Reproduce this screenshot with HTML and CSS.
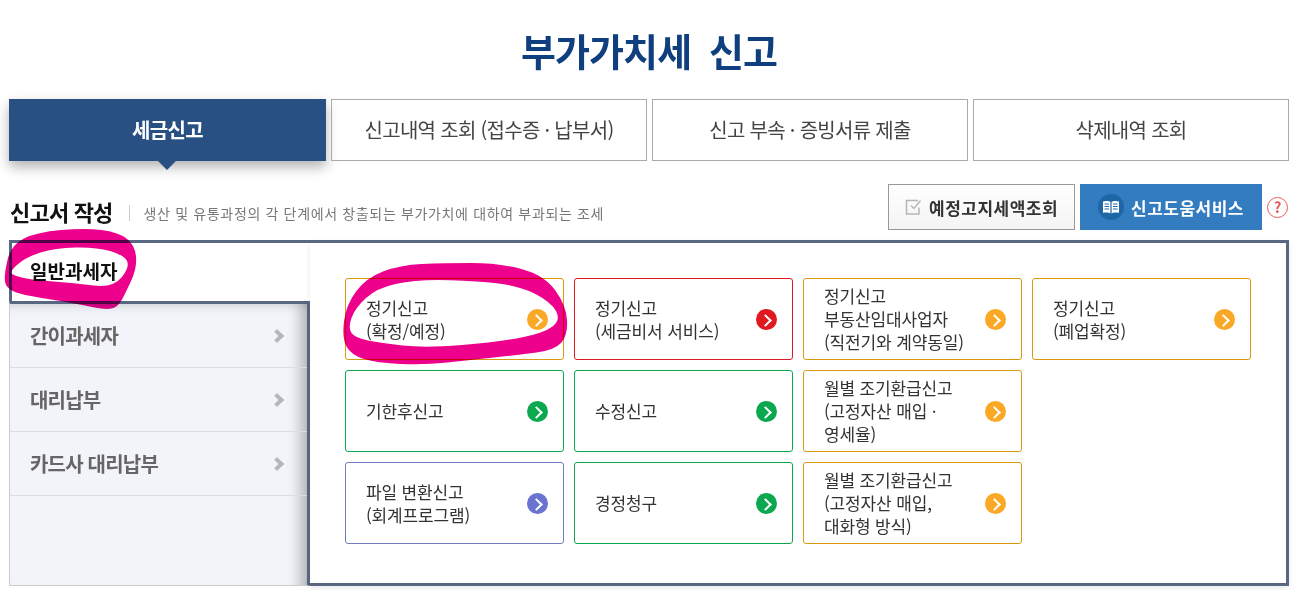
FILE: index.html
```html
<!DOCTYPE html>
<html lang="ko">
<head>
    <meta charset="UTF-8">
    <title>부가가치세 신고</title>
    <link rel="stylesheet" href="styles.css">
</head>
<body>
    <div class="page">
        <h1 class="page-title">부가가치세 신고</h1>

        <div class="tabs">
            <div class="tab active">세금신고</div>
            <div class="tab">신고내역 조회 (접수증 · 납부서)</div>
            <div class="tab">신고 부속 · 증빙서류 제출</div>
            <div class="tab">삭제내역 조회</div>
        </div>

        <div class="section-head">
            <div class="section-title">신고서 작성</div>
            <div class="section-desc">생산 및 유통과정의 각 단계에서 창출되는 부가가치에 대하여 부과되는 조세</div>
            <div class="btn btn-gray">
                <svg class="btn-check" width="18" height="18" viewBox="0 0 18 18" fill="none">
                    <path d="M14 9.5V16H1.5V2.5H13" stroke="#b4b6bb" stroke-width="1.5"/>
                    <path d="M6 7.5L9 10.5L15.5 2.5" stroke="#b4b6bb" stroke-width="1.5"/>
                </svg>
                예정고지세액조회
            </div>
            <div class="btn btn-blue">
                <span class="btn-book">
                    <svg width="18" height="14" viewBox="0 0 18 14" fill="#fff">
                        <path d="M1 1.5C4 .6 7 .8 8.4 2V13.4C7 12.4 4 12.2 1 12.8Z"/>
                        <path d="M17 1.5C14 .6 11 .8 9.6 2V13.4C11 12.4 14 12.2 17 12.8Z"/>
                        <path d="M2.5 4H7M2.5 6.5H7M2.5 9H7M11 4H15.5M11 6.5H15.5M11 9H15.5" stroke="#1e66a6" stroke-width="1"/>
                    </svg>
                </span>
                신고도움서비스
            </div>
            <div class="help">?</div>
        </div>

        <div class="panel">
            <div class="side">
                <div class="side-active">일반과세자</div>
                <div class="side-list">
                    <div class="side-item">간이과세자<span class="side-arrow"></span></div>
                    <div class="side-item">대리납부<span class="side-arrow"></span></div>
                    <div class="side-item">카드사 대리납부<span class="side-arrow"></span></div>
                </div>
            </div>
            <div class="content">
                <div class="card-grid">
                    <div class="card orange"><span>정기신고<br>(확정/예정)</span><i class="go"></i></div>
                    <div class="card red"><span>정기신고<br>(세금비서 서비스)</span><i class="go"></i></div>
                    <div class="card orange"><span>정기신고<br>부동산임대사업자<br>(직전기와 계약동일)</span><i class="go"></i></div>
                    <div class="card orange"><span>정기신고<br>(폐업확정)</span><i class="go"></i></div>

                    <div class="card green"><span>기한후신고</span><i class="go"></i></div>
                    <div class="card green"><span>수정신고</span><i class="go"></i></div>
                    <div class="card orange"><span>월별 조기환급신고<br>(고정자산 매입 ·<br>영세율)</span><i class="go"></i></div>
                    <div class="card-empty"></div>

                    <div class="card purple"><span>파일 변환신고<br>(회계프로그램)</span><i class="go"></i></div>
                    <div class="card green"><span>경정청구</span><i class="go"></i></div>
                    <div class="card orange"><span>월별 조기환급신고<br>(고정자산 매입,<br>대화형 방식)</span><i class="go"></i></div>
                </div>
            </div>
        </div>
    </div>

    <!-- highlighter marks drawn over the page -->
    <svg class="marks" width="1296" height="590" viewBox="0 0 1296 590">
        <path fill="#ec008c" fill-rule="evenodd" d="M7.5 260Q11 245 24 238.5Q37 232 61 230Q85 228 101.5 230Q118 232 126.5 238.5Q135 245 136 256.5Q137 268 131.5 280Q126 292 122 299.5Q118 307 111.5 308.5Q105 310 89.5 306.5Q74 303 48 299Q22 295 14 291.5Q6 288 5 281.5Q4 275 7.5 260Z
        M17.5 264.5Q26 257 40.5 252.5Q55 248 75.5 247.5Q96 247 110 251Q124 255 127 261Q130 267 121.5 277.5Q113 288 93.5 285.5Q74 283 53.5 281.5Q33 280 24 278Q15 276 12 274Q9 272 17.5 264.5Z"/>
        <path fill="#ec008c" fill-rule="evenodd" d="M344 321.5Q346 305 356 291.5Q366 278 383 271.5Q400 265 422 264Q444 263 471.5 263Q499 263 521.5 269Q544 275 555 290Q566 305 567 320Q568 335 561.5 342.5Q555 350 536.5 352.5Q518 355 494 357.5Q470 360 447.5 362.5Q425 365 401 364Q377 363 364 359Q351 355 346.5 346.5Q342 338 344 321.5Z
        M351.5 318Q355 308 366 298Q377 288 395.5 284Q414 280 438 280Q462 280 490 282.5Q518 285 534.5 293.5Q551 302 556 311Q561 320 552.5 326.5Q544 333 521.5 337.5Q499 342 462 345Q425 348 403 345.5Q381 343 368 340.5Q355 338 351.5 333Q348 328 351.5 318Z"/>
    </svg>
</body>
</html>
```

FILE: styles.css
```css
* {
    box-sizing: border-box;
}

body {
    margin: 0;
    height: 590px;
    overflow: hidden;
    background: #ffffff;
    font-family: "Noto Sans CJK KR", "Noto Sans", sans-serif;
    color: #333;
}

.page {
    width: 1280px;
    margin-left: 9px;
}

.page-title {
    margin: 0;
    height: 99px;
    padding: 21px 0 0 0;
    text-align: center;
    font-size: 38px;
    line-height: 58px;
    font-weight: 700;
    letter-spacing: -0.9px;
    word-spacing: 8px;
    color: #103f7f;
}

.tabs {
    display: grid;
    grid-template-columns: 317px 316px 316px 316px;
    gap: 5px;
}

.tab {
    position: relative;
    height: 62px;
    padding-bottom: 2px;
    display: flex;
    align-items: center;
    justify-content: center;
    border: 1px solid #aaaaaa;
    font-size: 20px;
    letter-spacing: -0.7px;
    color: #444;
}

.tab.active {
    background: #285082;
    border: 0;
    color: #fff;
    font-weight: 700;
    box-shadow: 0 6px 12px rgba(0, 0, 0, 0.3);
}

.tab.active::after {
    content: "";
    position: absolute;
    left: 149px;
    top: 62px;
    border-top: 9px solid #285082;
    border-left: 9px solid transparent;
    border-right: 9px solid transparent;
}

.section-head {
    display: flex;
    align-items: center;
    height: 46px;
    margin-top: 23px;
}

.section-title {
    margin-left: 1px;
    font-size: 22px;
    font-weight: 700;
    letter-spacing: -0.8px;
    color: #111;
    padding-top: 8px;
}

.section-desc {
    margin-left: 16px;
    padding-left: 14px;
    margin-top: 12px;
    height: 16px;
    line-height: 16px;
    border-left: 1px solid #cccccc;
    flex: 1;
    font-size: 14px;
    letter-spacing: 0.65px;
    white-space: nowrap;
    color: #777;
}

.btn {
    height: 46px;
    display: flex;
    align-items: center;
    font-size: 17px;
    font-weight: 700;
    letter-spacing: 0.5px;
    white-space: nowrap;
}

.btn-gray {
    width: 187px;
    padding-left: 16px;
    gap: 6px;
    border: 1px solid #999999;
    background: linear-gradient(to bottom, #ffffff, #f4f4f4);
    color: #333;
}

.btn-blue {
    width: 182px;
    margin-left: 5px;
    padding-left: 18px;
    gap: 7px;
    background: #337cc0;
    color: #fff;
}

.btn-book {
    width: 26px;
    height: 26px;
    border-radius: 50%;
    background: #1e66a6;
    display: flex;
    align-items: center;
    justify-content: center;
}

.help {
    width: 21px;
    height: 21px;
    margin: 0 1px 0 5px;
    border: 1.5px solid #e85a5a;
    border-radius: 50%;
    color: #e85a5a;
    font-size: 15px;
    font-weight: 700;
    line-height: 18px;
    letter-spacing: 0;
    text-align: center;
}

.panel {
    display: flex;
    height: 346px;
    margin-top: 10px;
}

.side {
    width: 301px;
    flex-shrink: 0;
    display: flex;
    flex-direction: column;
}

.side-active {
    height: 61px;
    padding: 14px 0 0 18px;
    border-top: 3px solid #5a6782;
    border-left: 3px solid #5a6782;
    font-size: 19px;
    font-weight: 700;
    color: #111;
}

.side-list {
    flex: 1;
    background: #f3f4fa;
    border-top: 3px solid #5a6782;
    border-right: 3px solid #5a6782;
    border-left: 1px solid #cccccc;
    border-bottom: 1px solid #cccccc;
    box-shadow: inset -18px 0 14px -12px rgba(0, 0, 0, 0.28), inset 0 10px 10px -8px rgba(0, 0, 0, 0.14);
}

.side-item {
    height: 64px;
    padding: 0 23px 0 20px;
    display: flex;
    align-items: center;
    justify-content: space-between;
    border-bottom: 1px solid #dcdde3;
    font-size: 20px;
    font-weight: 700;
    letter-spacing: -0.8px;
    color: #666;
}

.side-arrow {
    width: 10px;
    height: 10px;
    margin-right: 2px;
    border-top: 4px solid #b4b6c0;
    border-right: 4px solid #b4b6c0;
    transform: rotate(45deg);
}

.content {
    flex: 1;
    padding: 35px 0 0 35px;
    border-top: 3px solid #5a6782;
    border-right: 3px solid #5a6782;
    border-bottom: 3px solid #5a6782;
    background: #fff;
    box-shadow: 0 3px 6px rgba(0, 0, 0, 0.08);
}

.card-grid {
    display: grid;
    grid-template-columns: repeat(4, 219px);
    grid-auto-rows: 82px;
    gap: 10px;
}

.card {
    display: flex;
    align-items: center;
    justify-content: space-between;
    padding: 0 15px 0 20px;
    border: 1px solid;
    border-radius: 3px;
    font-size: 17px;
    line-height: 23px;
    letter-spacing: -0.15px;
    color: #333;
}

.card span {
    margin-top: -1px;
}

.go {
    position: relative;
    width: 21px;
    height: 21px;
    border-radius: 50%;
    flex-shrink: 0;
}

.go::after {
    content: "";
    position: absolute;
    left: 5px;
    top: 7px;
    width: 7px;
    height: 7px;
    border-top: 2.5px solid #fff;
    border-right: 2.5px solid #fff;
    transform: rotate(45deg);
}

.orange { border-color: #d99a0f; }
.orange .go { background: #faa926; }
.red { border-color: #e0181f; }
.red .go { background: #e0181f; }
.green { border-color: #0ca850; }
.green .go { background: #0ca850; }
.purple { border-color: #6f7cc4; }
.purple .go { background: #6a73d0; }

.marks {
    position: absolute;
    left: 0;
    top: 0;
    mix-blend-mode: multiply;
    pointer-events: none;
}
```
